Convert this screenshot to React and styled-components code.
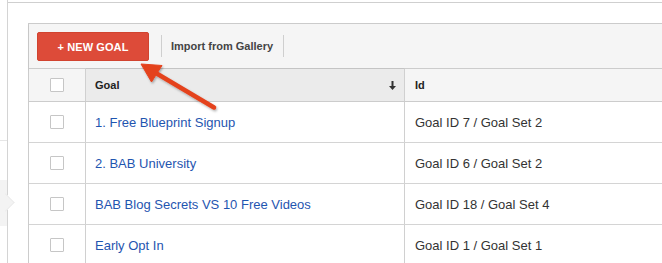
import React from "react";
import styled, { createGlobalStyle } from "styled-components";

const GlobalStyle = createGlobalStyle`
  html, body {
    margin: 0;
    padding: 0;
    background: #fff;
    overflow: hidden;
  }
  body {
    font-family: "Liberation Sans", Arial, sans-serif;
  }
`;

const goals = [
  { name: "1. Free Blueprint Signup", id: "Goal ID 7 / Goal Set 2" },
  { name: "2. BAB University", id: "Goal ID 6 / Goal Set 2" },
  { name: "BAB Blog Secrets VS 10 Free Videos", id: "Goal ID 18 / Goal Set 4" },
  { name: "Early Opt In", id: "Goal ID 1 / Goal Set 1" },
];

export default function App() {
  return (
    <>
      <GlobalStyle />
      <Page>
        <Sidebar>
          <SideDivider />
          <SideTab />
        </Sidebar>
        <Main>
          <Panel>
            <Toolbar>
              <NewButton>+ NEW GOAL</NewButton>
              <Separator />
              <ToolLink>Import from Gallery</ToolLink>
              <Separator />
            </Toolbar>
            <HeaderRow>
              <CheckCell $header>
                <Checkbox />
              </CheckCell>
              <HeadCell $sorted>
                Goal
                <SortArrow>
                  <svg width="7" height="9" viewBox="0 0 7 9">
                    <path d="M2.5 0h2v5h2.5L3.5 9 0 5h2.5z" fill="#333" />
                  </svg>
                </SortArrow>
              </HeadCell>
              <HeadCell>Id</HeadCell>
            </HeaderRow>
            {goals.map((g) => (
              <Row key={g.name}>
                <CheckCell>
                  <Checkbox />
                </CheckCell>
                <Cell>
                  <GoalLink>{g.name}</GoalLink>
                </Cell>
                <Cell>{g.id}</Cell>
              </Row>
            ))}
          </Panel>
        </Main>
        <Arrow width="240" height="130" viewBox="0 0 240 130">
          <defs>
            <filter id="sh" x="-20%" y="-20%" width="140%" height="140%">
              <feDropShadow dx="1" dy="1.5" stdDeviation="1.2" floodColor="#000" floodOpacity="0.3" />
            </filter>
          </defs>
          <g filter="url(#sh)" fill="#e4431f" stroke="#e4431f" strokeLinejoin="round">
            <line x1="155" y1="72.5" x2="214" y2="107.5" strokeWidth="4.5" strokeLinecap="round" />
            <polygon points="141,64 162,65.5 151.5,82" strokeWidth="1" />
          </g>
        </Arrow>
      </Page>
    </>
  );
}

const Page = styled.div`
  position: relative;
  display: flex;
  width: 662px;
  height: 263px;
  overflow: hidden;
`;

const Sidebar = styled.div`
  position: relative;
  flex: 0 0 7px;
  border-right: 1px solid #d4d4d4;
  padding-top: 140px;
`;

const SideDivider = styled.div`
  height: 1px;
  background: #e6e6e6;
  margin-bottom: 39px;
`;

const SideTab = styled.div`
  position: relative;
  height: 46px;
  background: #f3f3f3;

  &::after {
    content: "";
    position: absolute;
    top: 16px;
    right: -5px;
    width: 12px;
    height: 12px;
    background: #f3f3f3;
    border-top: 1px solid #ececec;
    border-right: 1px solid #ececec;
    transform: rotate(45deg);
  }
`;

const Main = styled.div`
  flex: 1;
  margin-top: 2px;
  border-top: 1px solid #cfcfcf;
  padding: 20px 0 0 20px;
`;

const Panel = styled.div`
  width: 700px;
  border-left: 1px solid #cccccc;
  border-top: 1px solid #cccccc;
`;

const Toolbar = styled.div`
  display: flex;
  align-items: center;
  height: 44px;
  padding-left: 8px;
  background: #f5f5f5;
  border-bottom: 1px solid #cccccc;
  box-shadow: 0 1px 2px rgba(0, 0, 0, 0.08);
`;

const NewButton = styled.button`
  width: 112px;
  height: 29px;
  margin-top: 1px;
  border: 1px solid #d1432f;
  border-radius: 2px;
  background: #dd4b39;
  color: #fff;
  font-family: inherit;
  font-size: 11px;
  font-weight: bold;
  letter-spacing: 0.1px;
  cursor: pointer;
`;

const Separator = styled.div`
  width: 1px;
  height: 22px;
  background: #cfcfcf;
  margin: 0 9px 0 12px;
`;

const ToolLink = styled.span`
  font-size: 11px;
  font-weight: bold;
  color: #444;
  margin-right: -2px;
`;

const gridRow = `
  display: grid;
  grid-template-columns: 57px 319px 1fr;
  & > * {
    border-right: 1px solid #d0d0d0;
  }
`;

const HeaderRow = styled.div`
  ${gridRow}
  height: 32px;
  border-bottom: 1px solid #cccccc;
  background: #f5f5f5;
`;

const Row = styled.div`
  ${gridRow}
  height: 40px;
  border-bottom: 1px solid #d4d4d4;
  background: #fff;
`;

const CheckCell = styled.div`
  display: flex;
  align-items: center;
  justify-content: center;
  background: ${(p) => (p.$header ? "#f5f5f5" : "#fff")};
`;

const Checkbox = styled.span`
  display: block;
  width: 12px;
  height: 12px;
  border: 1px solid #c6c6c6;
  background: #fff;
  border-radius: 1px;
`;

const HeadCell = styled.div`
  display: flex;
  align-items: center;
  justify-content: space-between;
  padding: 0 8px 0 9px;
  font-size: 11px;
  font-weight: bold;
  color: #222;
  background: ${(p) => (p.$sorted ? "#ebebeb" : "#f5f5f5")};
  ${(p) => (p.$sorted ? "border-top: 1px solid #c4c4c4; margin-top: -1px;" : "padding-left: 10px;")}
`;

const SortArrow = styled.span`
  display: flex;
  margin-top: 1px;
`;

const Cell = styled.div`
  display: flex;
  align-items: center;
  padding: 0 10px;
  font-size: 13px;
  color: #333;
  &:nth-child(2) {
    padding-left: 9px;
  }
`;

const GoalLink = styled.a`
  color: #1f55b0;
  text-decoration: none;
  cursor: pointer;
`;

const Arrow = styled.svg`
  position: absolute;
  left: 0;
  top: 0;
  pointer-events: none;
`;
